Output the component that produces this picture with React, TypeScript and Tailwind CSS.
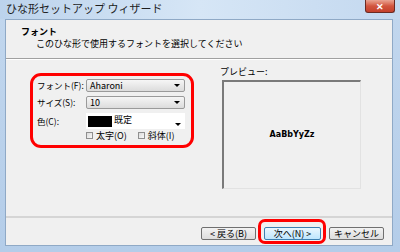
const jp = { fontFamily: '"Noto Sans CJK JP", "Noto Sans", sans-serif' }

function Combo({ value }: { value: string }) {
  return (
    <div className="flex h-[13px] w-[99px] items-center justify-between rounded-[2px] border border-[#9a9a9a] bg-gradient-to-b from-[#f6f6f6] to-[#dcdcdc] pl-[3px] pr-[4px]">
      <span className="text-[9px] leading-none text-black">{value}</span>
      <span className="h-0 w-0 border-x-[3px] border-t-[3px] border-x-transparent border-t-black" />
    </div>
  )
}

function Check({ label }: { label: string }) {
  return (
    <div className="flex items-center gap-[3px]">
      <span className="h-[7px] w-[7px] border border-[#8f8f8f] bg-gradient-to-br from-[#dcdcdc] to-[#f8f8f8]" />
      <span className="whitespace-nowrap text-[9px] leading-none text-black">{label}</span>
    </div>
  )
}

function Btn({ label }: { label: string }) {
  return (
    <div className="flex h-[13px] w-[55px] items-center justify-center rounded-[2px] border border-[#707070] bg-gradient-to-b from-[#f2f2f2] to-[#dddddd] text-[9px] leading-none text-black">
      {label}
    </div>
  )
}

export default function App() {
  return (
    <div className="flex h-[252px] w-[400px] flex-col overflow-hidden bg-gradient-to-b from-[#c2d7ee] to-[#b4cde9]" style={jp}>
      {/* title bar */}
      <div className="flex h-[19px] items-start justify-between bg-gradient-to-r from-[#bcd3ec] via-[#d6e6f6] to-[#c3d8ef]">
        <span className="pl-[6px] pt-[3px] text-[11px] leading-none text-[#1e1e1e]">ひな形セットアップ ウィザード</span>
        <div className="mr-[5px] flex h-[13px] w-[30px] items-center justify-center rounded-b-[3px] border border-t-0 border-[#6b2a22] bg-gradient-to-b from-[#e9a493] via-[#d2553f] to-[#c4402b]">
          <span className="text-[9px] font-bold leading-none text-white">✕</span>
        </div>
      </div>

      {/* client */}
      <div className="ml-[5px] mr-[7px] flex h-[227px] flex-col border border-[#8fa9c6] bg-[#f0f0f0]">
        <div className="flex h-[38px] flex-col pl-[15px] pt-[7px]">
          <span className="text-[9px] font-bold leading-none text-black">フォント</span>
          <span className="pl-[15px] pt-[3px] text-[9px] leading-none text-black">このひな形で使用するフォントを選択してください</span>
        </div>
        <div className="h-px bg-[#a0a0a0]" />
        <div className="h-px bg-white" />

        <div className="flex h-[157px] gap-[26px] pl-[24px] pt-[7px]">
          <div className="mt-[6px] flex h-[75px] w-[164px] flex-col gap-[4px] rounded-[11px] border-[3px] border-[#ff0000] pl-[4px] pt-[3px]">
            <div className="flex items-center">
              <span className="w-[49px] whitespace-nowrap text-[8.5px] leading-none text-black">フォント(F):</span>
              <Combo value="Aharoni" />
            </div>
            <div className="flex items-center">
              <span className="w-[49px] whitespace-nowrap text-[8.5px] leading-none text-black">サイズ(S):</span>
              <Combo value="10" />
            </div>
            <div className="flex items-start">
              <span className="w-[49px] whitespace-nowrap pt-[4px] text-[8.5px] leading-none text-black">色(C):</span>
              <div className="flex flex-col gap-[2px]">
                <div className="flex h-[16px] w-[99px] items-start justify-between bg-white pl-[2px] pr-[4px] pt-[3px]">
                  <div className="flex items-start gap-[2px]">
                    <span className="h-[11px] w-[24px] bg-black" />
                    <span className="-mt-[1px] text-[9px] leading-none text-black">既定</span>
                  </div>
                  <span className="mt-[7px] h-0 w-0 border-x-[3px] border-t-[3px] border-x-transparent border-t-black" />
                </div>
                <div className="flex gap-[11px]">
                  <Check label="太字(O)" />
                  <Check label="斜体(I)" />
                </div>
              </div>
            </div>
          </div>

          <div className="flex flex-col">
            <span className="text-[9px] leading-none text-black">プレビュー:</span>
            <div className="ml-[2px] mt-[4px] flex h-[109px] w-[139px] items-center justify-center border-l-2 border-t-2 border-b border-r border-l-[#7a7a7a] border-t-[#7a7a7a] border-b-[#e2e2e2] border-r-[#e2e2e2] bg-[#f0f0f0]">
              <span className="mt-[1px] text-[8px] font-bold leading-none text-black" style={{ fontFamily: '"DejaVu Sans", sans-serif' }}>AaBbYyZz</span>
            </div>
          </div>
        </div>

        <div className="h-[2px] bg-[#d5d5d5]" />

        <div className="flex h-[27px] items-start justify-end gap-[8px] pr-[8px] pt-[9px]">
          <Btn label="< 戻る(B)" />
          <div className="relative">
            <div className="flex h-[13px] w-[57px] items-center justify-center rounded-[2px] border border-[#3c7fb1] bg-gradient-to-b from-[#eaf6fd] to-[#bee6fd] text-[9px] leading-none text-black">
              次へ(N) &gt;
            </div>
            <div className="absolute -bottom-[4px] -left-[6px] -right-[5px] -top-[8px] rounded-[7px] border-[3px] border-[#ff0000]" />
          </div>
          <Btn label="キャンセル" />
        </div>
      </div>
    </div>
  )
}
